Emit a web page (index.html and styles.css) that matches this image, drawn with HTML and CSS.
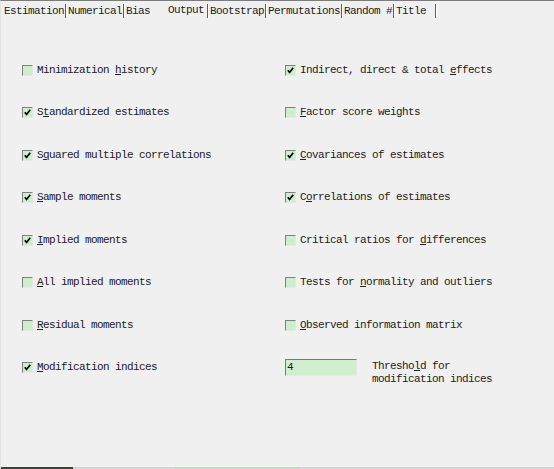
FILE: index.html
```html
<!DOCTYPE html>
<html>
<head>
<meta charset="utf-8">
<link rel="stylesheet" href="styles.css">
</head>
<body>
<div class="window">
  <div class="tabs">
    <span class="tab">Estimation</span><span class="sep"></span>
    <span class="tab">Numerical</span><span class="sep"></span>
    <span class="tab">Bias</span>
    <span class="tab active">Output</span><span class="sep sep-wide"></span>
    <span class="tab">Bootstrap</span><span class="sep"></span>
    <span class="tab">Permutations</span><span class="sep"></span>
    <span class="tab">Random #</span><span class="sep"></span>
    <span class="tab">Title</span><span class="sep sep-end"></span>
  </div>
  <div class="panel">
    <label class="opt"><span class="box"></span><span>Minimization <u>h</u>istory</span></label>
    <label class="opt"><span class="box on"><svg viewBox="0 0 9 9"><path d="M1.8 4.2 L3.6 6.4 L7.2 1.8"/></svg></span><span>Indirect, direct &amp; total <u>e</u>ffects</span></label>

    <label class="opt"><span class="box on"><svg viewBox="0 0 9 9"><path d="M1.8 4.2 L3.6 6.4 L7.2 1.8"/></svg></span><span>S<u>t</u>andardized estimates</span></label>
    <label class="opt"><span class="box"></span><span><u>F</u>actor score weights</span></label>

    <label class="opt"><span class="box on"><svg viewBox="0 0 9 9"><path d="M1.8 4.2 L3.6 6.4 L7.2 1.8"/></svg></span><span>S<u>q</u>uared multiple correlations</span></label>
    <label class="opt"><span class="box on"><svg viewBox="0 0 9 9"><path d="M1.8 4.2 L3.6 6.4 L7.2 1.8"/></svg></span><span><u>C</u>ovariances of estimates</span></label>

    <label class="opt"><span class="box on"><svg viewBox="0 0 9 9"><path d="M1.8 4.2 L3.6 6.4 L7.2 1.8"/></svg></span><span><u>S</u>ample moments</span></label>
    <label class="opt"><span class="box on"><svg viewBox="0 0 9 9"><path d="M1.8 4.2 L3.6 6.4 L7.2 1.8"/></svg></span><span>C<u>o</u>rrelations of estimates</span></label>

    <label class="opt"><span class="box on"><svg viewBox="0 0 9 9"><path d="M1.8 4.2 L3.6 6.4 L7.2 1.8"/></svg></span><span><u>I</u>mplied moments</span></label>
    <label class="opt"><span class="box"></span><span>Critical ratios for <u>d</u>ifferences</span></label>

    <label class="opt"><span class="box"></span><span><u>A</u>ll implied moments</span></label>
    <label class="opt"><span class="box"></span><span>Tests for <u>n</u>ormality and outliers</span></label>

    <label class="opt"><span class="box"></span><span><u>R</u>esidual moments</span></label>
    <label class="opt"><span class="box"></span><span><u>O</u>bserved information matrix</span></label>

    <label class="opt"><span class="box on"><svg viewBox="0 0 9 9"><path d="M1.8 4.2 L3.6 6.4 L7.2 1.8"/></svg></span><span><u>M</u>odification indices</span></label>
    <div class="threshold">
      <div class="field">4</div>
      <div class="tlabel">Thresho<u>l</u>d for<br>modification indices</div>
    </div>
  </div>
  <div class="footer">
    <span class="seg dark"></span><span class="seg grey1"></span><span class="seg green"></span><span class="seg grey2"></span>
  </div>
</div>
</body>
</html>
```
FILE: styles.css
```css
html, body {
  margin: 0;
  padding: 0;
}
body {
  width: 554px;
  height: 469px;
  overflow: hidden;
  background: #f0f0f0;
  font-family: "Liberation Mono", "DejaVu Sans Mono", monospace;
  font-size: 11px;
  letter-spacing: -0.6px;
  color: #222222;
}
.window {
  height: 469px;
  display: flex;
  flex-direction: column;
  box-sizing: border-box;
  border-top: 1px solid #7c7c7c;
  border-left: 1px solid #e2e2e2;
}
.tabs {
  height: 17px;
  display: flex;
  align-items: center;
  padding: 1px 0 0 3px;
  white-space: pre;
}
.tab {
  line-height: 14px;
}
.tab.active {
  margin-left: 18px;
  padding-bottom: 2px;
}
.sep {
  width: 1px;
  height: 14px;
  background: #5e5e5e;
  border-right: 1px solid #ffffff;
  margin: 1px 1px 0 1px;
}
.sep-wide {
  margin-left: 3px;
}
.sep-end {
  margin-left: 9px;
}
.panel {
  flex: 1;
  display: grid;
  grid-template-columns: 263px 1fr;
  grid-auto-rows: 42.5px;
  align-content: start;
  padding: 30px 0 0 21px;
}
.opt {
  display: flex;
  align-items: center;
  gap: 4px;
  white-space: pre;
  line-height: 13px;
}
.opt u, .tlabel u {
  text-decoration: underline;
  text-underline-offset: 1px;
}
.box {
  width: 9px;
  height: 9px;
  flex: none;
  border: 1px solid;
  border-color: #808080 #e6e6e6 #e6e6e6 #808080;
  background: #cdeecd;
  display: flex;
}
.box svg {
  width: 9px;
  height: 9px;
}
.box path {
  fill: none;
  stroke: #000;
  stroke-width: 1.7;
}
.threshold {
  display: flex;
  align-items: flex-start;
  gap: 15px;
  align-self: start;
  margin-top: 12.5px;
}
.field {
  width: 69px;
  height: 15px;
  border: 1px solid;
  border-color: #7a7a7a #e8e8e8 #e8e8e8 #7a7a7a;
  background: #cfefcf;
  line-height: 15px;
  padding-left: 1px;
  box-sizing: content-box;
}
.tlabel {
  line-height: 13px;
  margin-top: 1px;
  white-space: pre;
}
.footer {
  height: 2px;
  display: flex;
}
.seg { height: 2px; }
.dark { width: 72px; background: #3d3f3a; }
.grey1 { width: 102px; background: #d4d4d4; }
.green { width: 125px; background: #c6d8c2; }
.grey2 { flex: 1; background: #d6d6d6; }
```
